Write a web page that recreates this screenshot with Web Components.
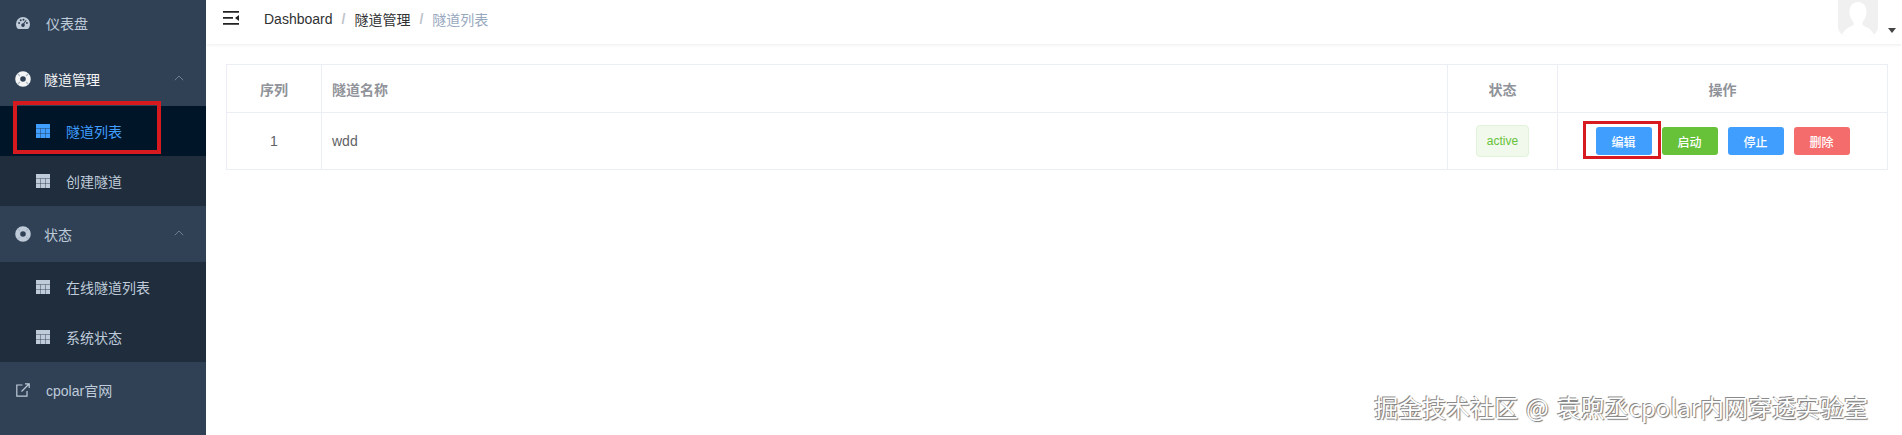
<!DOCTYPE html>
<html lang="zh">
<head>
<meta charset="utf-8">
<title>隧道列表</title>
<style>
html, body { margin: 0; height: 100%; overflow: hidden; background: #fff; }
body { font-family: "Liberation Sans", "Noto Sans CJK SC", sans-serif; }
</style>
</head>
<body>
<app-shell>
    <side-menu slot="side"></side-menu>
    <top-bar slot="top"></top-bar>
    <tunnel-table></tunnel-table>
</app-shell>
<script>
const ICONS = {
    gauge: `<svg width="14" height="12" viewBox="0 0 14 12"><path fill="currentColor" fill-rule="evenodd" d="M7 0a7 7 0 0 1 7 7c0 1.900-.6 3.500-1.500 4.600-.3.300-.6.400-1 .4H2.500c-.4 0-.7-.1-1-.4C.6 10.500 0 8.900 0 7a7 7 0 0 1 7-7zM3.100 5.100a1 1 0 1 0 0 2 1 1 0 0 0 0-2zM4.700 2.200a1 1 0 1 0 0 2 1 1 0 0 0 0-2zM7.500 1.700a1 1 0 1 0 0 2 1 1 0 0 0 0-2zM10.900 5.100a1 1 0 1 0 0 2 1 1 0 0 0 0-2zM9.800 2.900L7.300 6.300a1.800 1.800 0 1 0 1 .5l2.300-3.400z"/></svg>`,
    ring: `<svg width="16" height="16" viewBox="0 0 16 16"><circle cx="8" cy="8" r="5.300" fill="none" stroke="currentColor" stroke-width="5"/><path d="M2.800 2.800L5 5M13.200 2.800L11 5M2.800 13.200L5 11M13.200 13.200L11 11" stroke="#a9b7c6" stroke-width="1.200"/></svg>`,
    table: `<svg width="14" height="14" viewBox="0 0 14 14"><rect width="14" height="14" fill="currentColor"/><path d="M0 4.500h14M0 9.500h14M4.500 4.500V14M9.500 4.500V14" stroke="#1f2d3d" stroke-opacity=".45" stroke-width=".9"/></svg>`,
    link: `<svg width="14" height="14" viewBox="0 0 14 14" fill="none" stroke="currentColor" stroke-width="1.200"><path d="M6.500 2H.8v11.200H11V8"/><path d="M5.500 8.500L13 1M9 .8h4.200V5"/></svg>`,
    chevron: `<svg width="10" height="6" viewBox="0 0 10 6" fill="none" stroke="currentColor" stroke-width="1"><path d="M.8 5.200L5 1l4.200 4.200"/></svg>`,
    fold: `<svg width="16" height="14" viewBox="0 0 16 14"><path fill="#222" d="M0 0h16v1.800H0zM0 6h10v1.800H0zM0 12h16v1.800H0zM16 4v6l-4-3z"/></svg>`
};

class AppShell extends HTMLElement {
    constructor() {
        super();
        this.attachShadow({ mode: "open" });
        this.shadowRoot.innerHTML = `
        <style>
        :host { display: flex; height: 435px; position: relative; overflow: hidden; }
        .aside { width: 206px; flex: none; background: #304156; }
        .main { flex: 1; min-width: 0; display: flex; flex-direction: column; }
        .content { padding: 20px 14px 0 20px; }
        .mark {
            position: absolute;
            right: 34px;
            bottom: 13px;
            font: 24px/30px "Noto Sans CJK SC", sans-serif;
            word-spacing: 2.500px;
            color: #fff;
            white-space: nowrap;
            text-shadow: -1px -1px 0 #8a8a8a, 1px 1px 1px #777;
        }
        </style>
        <div class="aside"><slot name="side"></slot></div>
        <div class="main">
            <slot name="top"></slot>
            <div class="content"><slot></slot></div>
        </div>
        <div class="mark">掘金技术社区 @ 袁煦丞cpolar内网穿透实验室</div>
        `;
    }
}

class SideMenu extends HTMLElement {
    constructor() {
        super();
        this.attachShadow({ mode: "open" });
        this.shadowRoot.innerHTML = `
        <style>
        :host { display: block; position: relative; font-size: 14px; color: #bfcbd9; }
        .row { display: flex; align-items: center; height: 56px; box-sizing: border-box; }
        .row.first { height: 51px; padding-bottom: 5px; }
        .row.head { height: 55px; position: relative; }
        .row.state { height: 56px; }
        .row svg { flex: none; }
        .top { padding-left: 16px; }
        .top .ico { width: 30px; display: flex; }
        .top.open { color: #f4f4f5; padding-left: 15px; }
        .top.open .ico { width: 29px; }
        .arrow { position: absolute; right: 22px; top: 24px; display: flex; color: #6f7f92; }
        .sub { background: #1f2d3d; }
        .sub .row { height: 50px; padding-left: 36px; }
        .sub .ico { width: 30px; display: flex; }
        .sub .on { background: #001528; color: #409eff; }
        .mark { position: absolute; left: 13px; top: 101px; width: 148px; height: 53px; box-sizing: border-box; border: 4px solid #d71a1f; }
        </style>
        <div class="row top first"><span class="ico">${ICONS.gauge}</span>仪表盘</div>
        <div class="row top open head"><span class="ico">${ICONS.ring}</span>隧道管理<span class="arrow">${ICONS.chevron}</span></div>
        <div class="sub">
            <div class="row on"><span class="ico">${ICONS.table}</span>隧道列表</div>
            <div class="row"><span class="ico">${ICONS.table}</span>创建隧道</div>
        </div>
        <div class="row top head state" style="padding-left:15px"><span class="ico" style="width:29px">${ICONS.ring}</span>状态<span class="arrow">${ICONS.chevron}</span></div>
        <div class="sub">
            <div class="row"><span class="ico">${ICONS.table}</span>在线隧道列表</div>
            <div class="row"><span class="ico">${ICONS.table}</span>系统状态</div>
        </div>
        <div class="row top"><span class="ico">${ICONS.link}</span>cpolar官网</div>
        <div class="mark"></div>
        `;
    }
}

class TopBar extends HTMLElement {
    constructor() {
        super();
        this.attachShadow({ mode: "open" });
        this.shadowRoot.innerHTML = `
        <style>
        :host { display: flex; align-items: center; height: 44px; box-sizing: border-box; padding: 0 6px 6px 17px; box-shadow: 0 1px 3px rgba(0,21,41,.08); font-size: 14px; color: #303133; position: relative; }
        .fold { display: flex; width: 41px; margin-bottom: 2px; }
        .sep { color: #c0c4cc; margin: 0 9px; font-weight: 700; }
        .last { color: #97a8be; }
        .user { margin-left: auto; align-self: flex-start; display: flex; align-items: flex-start; }
        .avatar { width: 40px; height: 36px; background: #f0f0f0; border-radius: 0 0 9px 9px; display: block; }
        .caret { width: 0; height: 0; border: 4px solid transparent; border-top: 5px solid #444; border-bottom: 0; margin: 28px 0 0 10px; }
        </style>
        <span class="fold">${ICONS.fold}</span>
        <span>Dashboard</span><span class="sep">/</span><span>隧道管理</span><span class="sep">/</span><span class="last">隧道列表</span>
        <div class="user">
            <svg class="avatar" viewBox="0 0 40 36"><path fill="#fff" d="M20 2c6 0 9 5 8.500 11-.4 4-2 7-4 9v3c3 2 9 3 12 11H3.500c3-8 9-9 12-11v-3c-2-2-3.600-5-4-9C11 7 14 2 20 2z"/></svg>
            <span class="caret"></span>
        </div>
        `;
    }
}

class ActionButton extends HTMLElement {
    constructor() {
        super();
        this.attachShadow({ mode: "open" });
        this.shadowRoot.innerHTML = `
        <style>
        :host { display: block; }
        button {
            display: block;
            width: 56px;
            height: 28px;
            padding: 0;
            border: 0;
            border-radius: 3px;
            background: var(--bg, #409eff);
            color: #fff;
            font: 500 12px "Liberation Sans", "Noto Sans CJK SC", sans-serif;
        }
        </style>
        <button type="button"><slot></slot></button>
        `;
    }
}

class TunnelTable extends HTMLElement {
    constructor() {
        super();
        this.attachShadow({ mode: "open" });
        this.shadowRoot.innerHTML = `
        <style>
        :host { display: block; font-size: 14px; color: #606266; }
        .grid { display: grid; grid-template-columns: 94px 1126px 110px 1fr; border: 1px solid #ebeef5; }
        .cell { display: flex; align-items: center; border-left: 1px solid #ebeef5; padding-left: 10px; box-sizing: border-box; }
        .cell:nth-child(4n+1) { border-left: 0; }
        .c { justify-content: center; padding-left: 0; }
        .hd { height: 48px; color: #909399; font-weight: 700; border-bottom: 1px solid #ebeef5; }
        .bd { height: 56px; }
        .tag { box-sizing: border-box; height: 32px; width: 53px; display: flex; align-items: center; justify-content: center; background: #f0f9eb; border: 1px solid #e1f3d8; border-radius: 4px; color: #67c23a; font-size: 12px; }
        .ops { display: flex; gap: 10px; position: relative; }
        .hit { position: absolute; left: -13px; top: -6px; width: 78px; height: 38px; box-sizing: border-box; border: 3px solid #d71a1f; pointer-events: none; }
        </style>
        <div class="grid">
            <div class="cell hd c">序列</div>
            <div class="cell hd">隧道名称</div>
            <div class="cell hd c">状态</div>
            <div class="cell hd c">操作</div>
            <div class="cell bd c">1</div>
            <div class="cell bd">wdd</div>
            <div class="cell bd c"><span class="tag">active</span></div>
            <div class="cell bd c">
                <div class="ops">
                    <action-button>编辑</action-button>
                    <action-button style="--bg:#67c23a">启动</action-button>
                    <action-button>停止</action-button>
                    <action-button style="--bg:#f56c6c">删除</action-button>
                    <div class="hit"></div>
                </div>
            </div>
        </div>
        `;
    }
}

customElements.define("app-shell", AppShell);
customElements.define("side-menu", SideMenu);
customElements.define("top-bar", TopBar);
customElements.define("action-button", ActionButton);
customElements.define("tunnel-table", TunnelTable);
</script>
</body>
</html>
